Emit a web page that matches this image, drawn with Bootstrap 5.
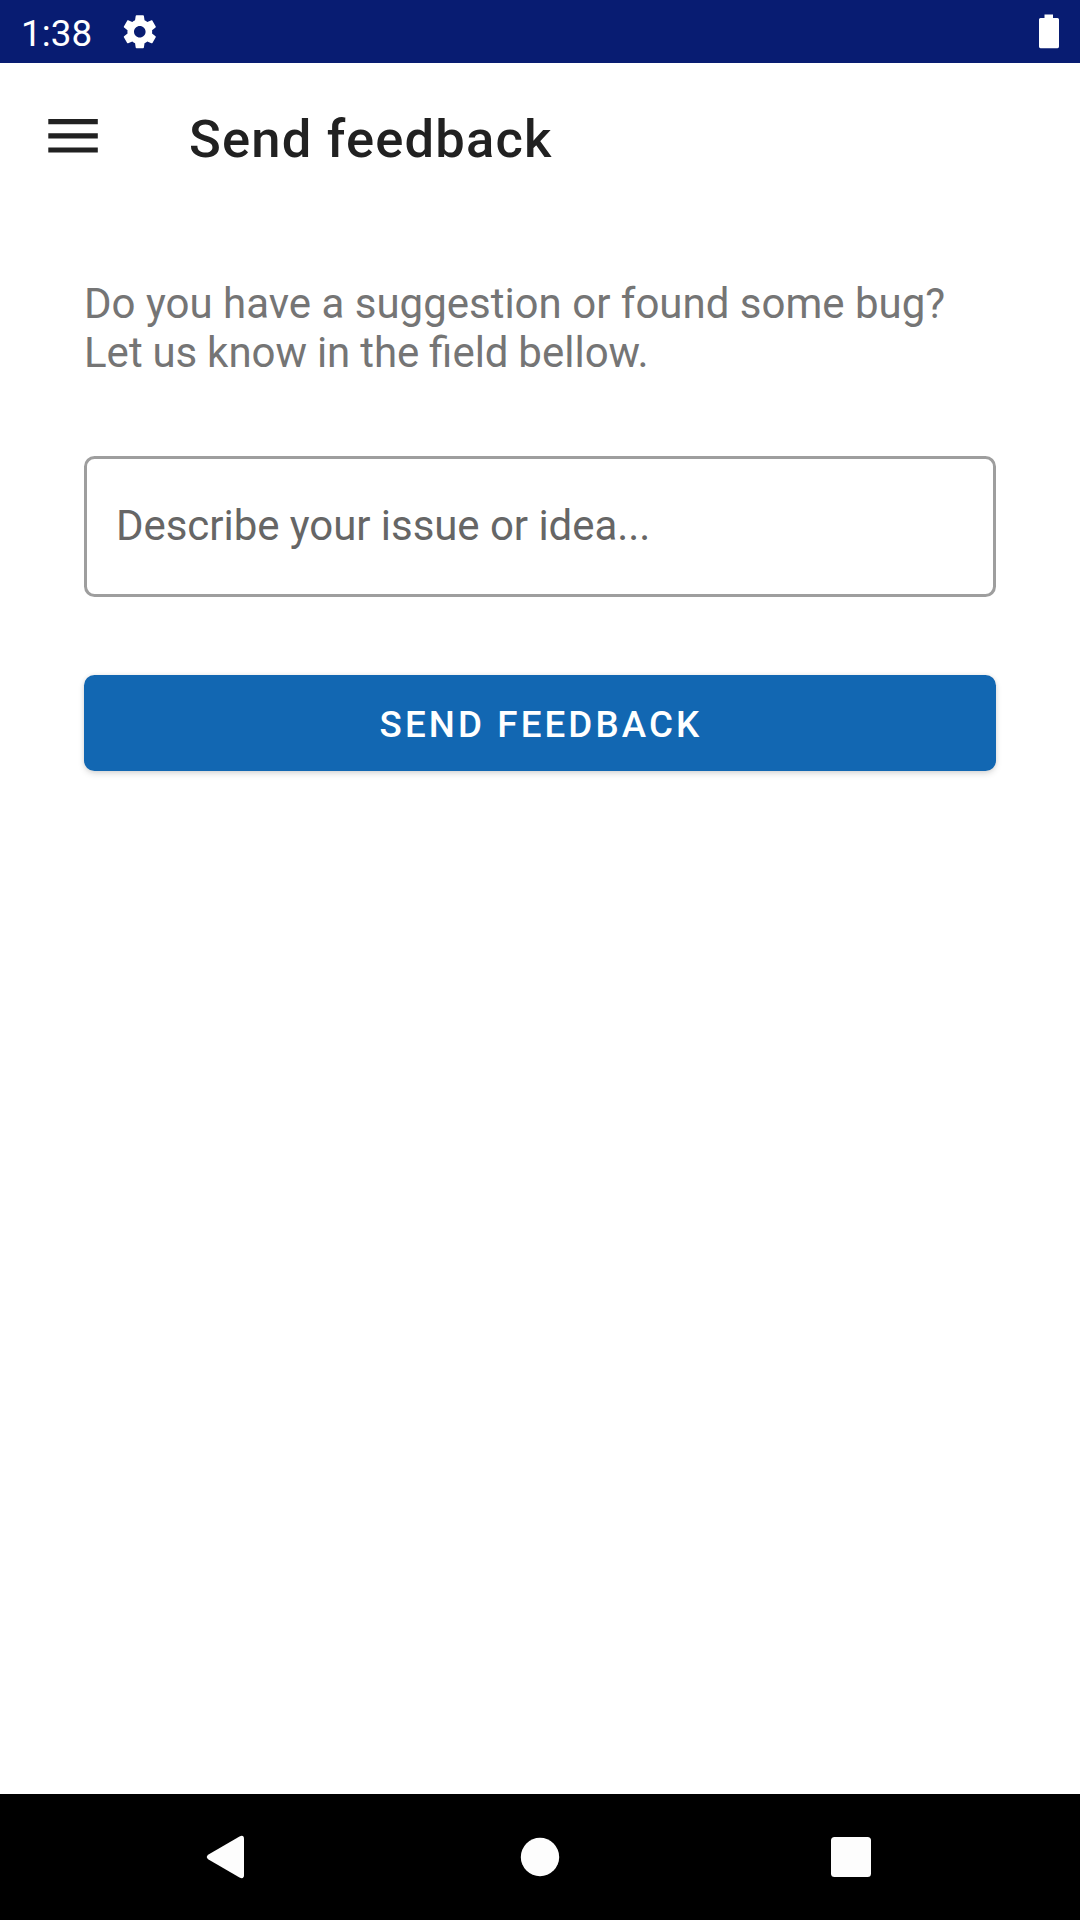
<!DOCTYPE html>
<html lang="en">
<head>
<meta charset="utf-8">
<meta name="viewport" content="width=device-width, initial-scale=1">
<title>Send feedback</title>
<link href="https://cdn.jsdelivr.net/npm/bootstrap@5.3.0/dist/css/bootstrap.min.css" rel="stylesheet">
<style>
body{font-family:Roboto,"Noto Sans",sans-serif;background:#fff;height:1920px;overflow:hidden}
svg{display:block;flex:none}
.status-bar{height:63px;background:#081c72;color:#fff;font-size:36.75px;line-height:43px;padding:1px 15px 0 21px}
.clock{padding-top:3px;margin-right:28px;letter-spacing:.1px}
.app-bar{height:147px;padding:0 42px;color:#212121}
.menu-btn{margin-right:84px}
.app-title{font-size:52.5px;line-height:62px;font-weight:500;letter-spacing:1.2px;padding-top:4px}
.content{padding:69px 84px 0}
.intro{font-size:42px;line-height:49.2px;color:#757575;margin-bottom:79px}
.intro-end{word-spacing:-.6px}
.issue-input,.issue-input:focus{height:141px;border:3px solid #9e9e9e;border-radius:10.5px;padding:0 29px 3px;font-size:42px;letter-spacing:-.05px;color:#212121;box-shadow:none;background:#fff}
.issue-input::placeholder{color:#666;opacity:1}
.send-btn{--bs-btn-bg:#1267b2;--bs-btn-border-color:#1267b2;height:96px;margin-top:78px;padding:2px 0 0 2px;border:0;border-radius:10.5px;font-size:36.75px;font-weight:500;letter-spacing:3.1px;line-height:43px;box-shadow:0 3px 6px rgba(0,0,0,.13),0 0 4px rgba(0,0,0,.08)}
.nav-bar{height:126px;background:#000}
</style>
</head>
<body class="d-flex flex-column">
<div class="status-bar d-flex align-items-center">
  <span class="clock">1:38</span>
  <svg width="39.6" height="39.6" viewBox="0 0 24 24" fill="#fff"><path d="M19.43 12.98c.04-.32.07-.64.07-.98s-.03-.66-.07-.98l2.11-1.65c.19-.15.24-.42.12-.64l-2-3.46c-.12-.22-.39-.3-.61-.22l-2.490 1c-.52-.4-1.080-.73-1.690-.98l-.38-2.650C14.460 2.180 14.250 2 14 2h-4c-.25 0-.46.18-.49.42l-.38 2.650c-.61.25-1.170.59-1.690.98l-2.490-1c-.23-.09-.49 0-.61.22l-2 3.460c-.13.22-.07.49.12.64l2.110 1.650c-.04.32-.07.65-.07.98s.03.66.07.98l-2.110 1.650c-.19.15-.24.42-.12.64l2 3.460c.12.22.39.3.61.22l2.490-1c.52.4 1.080.73 1.690.98l.38 2.650c.03.24.24.42.49.42h4c.25 0 .46-.18.49-.42l.38-2.650c.61-.25 1.170-.59 1.690-.98l2.490 1c.23.09.49 0 .61-.22l2-3.460c.12-.22.07-.49-.12-.64l-2.110-1.650zM12 15.500c-1.930 0-3.500-1.570-3.500-3.500s1.570-3.500 3.500-3.500 3.500 1.570 3.500 3.500-1.570 3.500-3.500 3.500z"/></svg>
  <svg class="ms-auto" width="32" height="42" viewBox="0 0 32 42" fill="#fff"><path d="M11.500 3.500h8.500v3.500h4.500q1.500 0 1.500 1.500v27q0 1.700-1.500 1.700h-17q-1.500 0-1.500-1.700V8.500q0-1.500 1.500-1.500h4z"/></svg>
</div>
<header class="app-bar d-flex align-items-center">
  <button class="menu-btn btn p-0 border-0" type="button" aria-label="Open menu">
    <svg width="63" height="63" viewBox="0 0 63 63" fill="#212121"><path d="M6.300 14h49.500v5.200H6.300zM6.300 28.200h49.500v5.200H6.300zM6.300 42.400h49.500v5.200H6.300z"/></svg>
  </button>
  <h1 class="app-title mb-0">Send feedback</h1>
</header>
<main class="content flex-grow-1">
  <p class="intro">Do you have a suggestion or found some bug?<br><span class="intro-end">Let us know in the field bellow.</span></p>
  <input class="issue-input form-control" type="text" placeholder="Describe your issue or idea...">
  <button class="send-btn btn btn-primary w-100 text-uppercase" type="button">Send feedback</button>
</main>
<nav class="nav-bar">
  <svg width="1080" height="126" viewBox="0 0 1080 126" fill="#fdfdfd"><path d="M208.500 60.500 239.500 42.400Q244 40.500 244 45v36q0 4.500-4.500 2.600L208.500 65.500q-3.500-2.500 0-5z"/><circle cx="540" cy="63" r="19.200"/><rect x="831" y="43" width="40" height="40" rx="3.500"/></svg>
</nav>
<script src="https://cdn.jsdelivr.net/npm/bootstrap@5.3.0/dist/js/bootstrap.bundle.min.js"></script>
</body>
</html>
